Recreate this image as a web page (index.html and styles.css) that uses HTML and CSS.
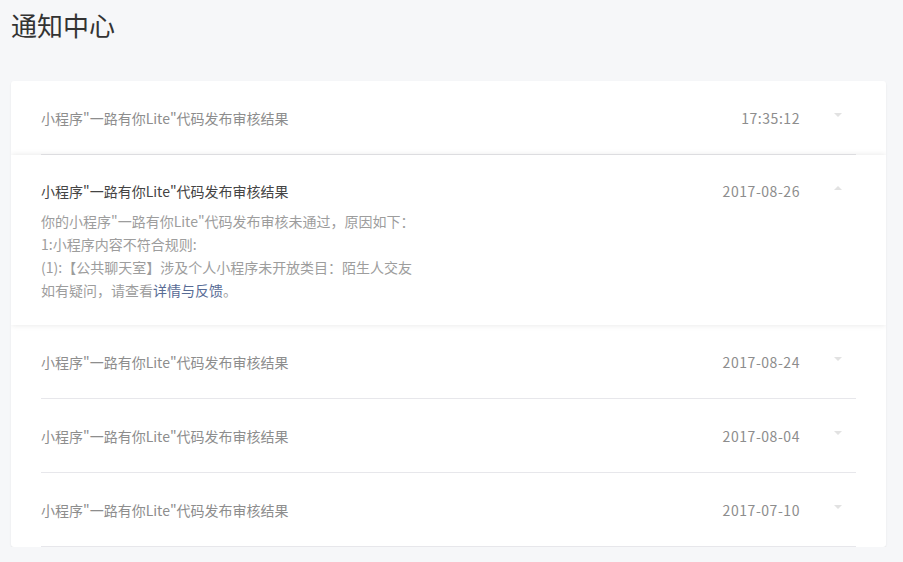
FILE: index.html
```html
<!DOCTYPE html>
<html lang="zh-CN">
<head>
<meta charset="utf-8">
<title>通知中心</title>
<link rel="stylesheet" href="styles.css">
</head>
<body>
<div class="page">
  <h1 class="page-title">通知中心</h1>
  <div class="card">
    <div class="item">
      <div class="item-head">
        <span class="item-title">小程序"一路有你Lite"代码发布审核结果</span>
        <span class="item-time">17:35:12</span>
        <span class="arrow"><svg width="8" height="4" viewBox="0 0 8 4"><path d="M0 0 L8 0 L4 4 Z" fill="#e2e2e2"/></svg></span>
      </div>
    </div>
    <div class="item open">
      <div class="item-head">
        <span class="item-title">小程序"一路有你Lite"代码发布审核结果</span>
        <span class="item-time">2017-08-26</span>
        <span class="arrow"><svg width="8" height="4" viewBox="0 0 8 4"><path d="M0 4 L8 4 L4 0 Z" fill="#e2e2e2"/></svg></span>
      </div>
      <div class="item-body">
        <p>你的小程序"一路有你Lite"代码发布审核未通过，原因如下：</p>
        <p>1:小程序内容不符合规则:</p>
        <p>(1):【公共聊天室】涉及个人小程序未开放类目：陌生人交友</p>
        <p>如有疑问，请查看<a class="link" href="#">详情与反馈</a>。</p>
      </div>
    </div>
    <div class="item">
      <div class="item-head">
        <span class="item-title">小程序"一路有你Lite"代码发布审核结果</span>
        <span class="item-time">2017-08-24</span>
        <span class="arrow"><svg width="8" height="4" viewBox="0 0 8 4"><path d="M0 0 L8 0 L4 4 Z" fill="#e2e2e2"/></svg></span>
      </div>
    </div>
    <div class="item">
      <div class="item-head">
        <span class="item-title">小程序"一路有你Lite"代码发布审核结果</span>
        <span class="item-time">2017-08-04</span>
        <span class="arrow"><svg width="8" height="4" viewBox="0 0 8 4"><path d="M0 0 L8 0 L4 4 Z" fill="#e2e2e2"/></svg></span>
      </div>
    </div>
    <div class="item">
      <div class="item-head">
        <span class="item-title">小程序"一路有你Lite"代码发布审核结果</span>
        <span class="item-time">2017-07-10</span>
        <span class="arrow"><svg width="8" height="4" viewBox="0 0 8 4"><path d="M0 0 L8 0 L4 4 Z" fill="#e2e2e2"/></svg></span>
      </div>
    </div>
  </div>
</div>
</body>
</html>
```
FILE: styles.css
```css
html, body {
  margin: 0;
  padding: 0;
  background: #f6f7f9;
}
body {
  font-family: "Microsoft YaHei", "Noto Sans CJK SC", "Noto Sans", sans-serif;
  font-size: 14px;
  color: #353535;
}
.page {
  padding: 0 17px 0 11px;
}
.page-title {
  margin: 0;
  padding: 8px 0 0 0;
  height: 74px;
  box-sizing: border-box;
  font-size: 26px;
  font-weight: normal;
  line-height: 34px;
  color: #333;
}
.card {
  background: #fff;
  border-radius: 3px;
  box-shadow: 0 1px 2px rgba(0, 0, 0, 0.08);
  margin-top: 7px;
  overflow: hidden;
}
.item {
  padding: 0 30px;
}
.item-head {
  display: flex;
  align-items: center;
  height: 73px;
  border-bottom: 1px solid #e7e7eb;
}
.item-title {
  flex: 1;
  color: #8d8d8d;
  line-height: 20px;
}
.item-time {
  color: #8d8d8d;
  line-height: 20px;
  letter-spacing: 0.55px;
}
.arrow {
  width: 56px;
  display: flex;
  justify-content: flex-end;
  padding-right: 14px;
  box-sizing: border-box;
  margin-top: -6px;
}
.arrow svg {
  display: block;
}
.item.open {
  box-shadow: 0 0 6px rgba(0, 0, 0, 0.1);
  position: relative;
}
.item.open .item-head {
  height: auto;
  padding-top: 26px;
  border-bottom: none;
}
.item.open .item-title {
  color: #444;
}
.item-body {
  padding: 9px 0 23px;
  color: #9d9d9d;
  line-height: 23px;
}
.item-body p {
  margin: 0;
}
.link {
  color: #576b95;
  text-decoration: none;
}
```
